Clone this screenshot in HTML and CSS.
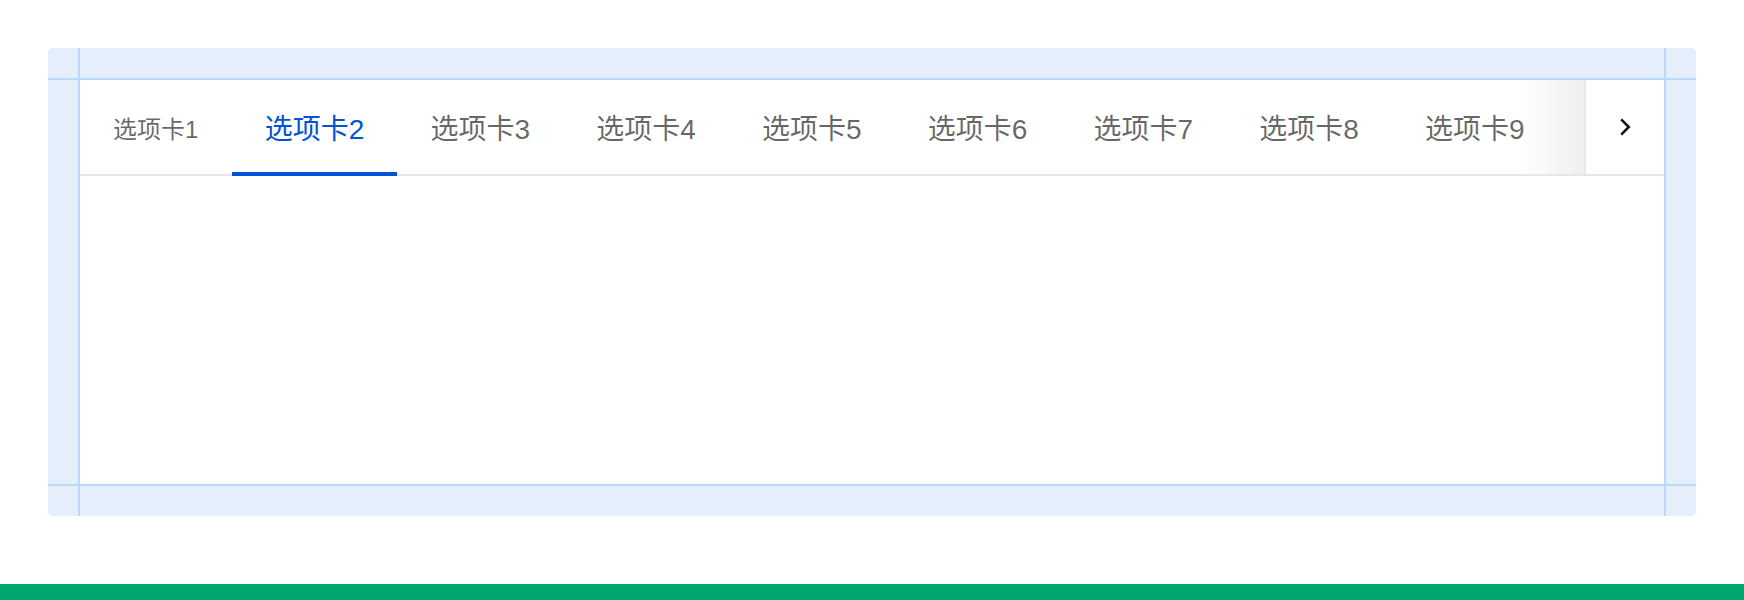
FILE: index.html
```html
<!DOCTYPE html>
<html lang="zh-CN">
<head>
<meta charset="utf-8">
<title>Tabs</title>
<link rel="stylesheet" href="styles.css">
</head>
<body>
<div class="page">
  <div class="frame">
    <div class="pad"></div><div class="pad"></div><div class="pad"></div>
    <div class="pad"></div>
    <div class="content">
      <div class="tabs-nav">
        <div class="tabs-scroll">
          <div class="tab tab-small">选项卡1</div>
          <div class="tab is-active">选项卡2</div>
          <div class="tab">选项卡3</div>
          <div class="tab">选项卡4</div>
          <div class="tab">选项卡5</div>
          <div class="tab">选项卡6</div>
          <div class="tab">选项卡7</div>
          <div class="tab">选项卡8</div>
          <div class="tab">选项卡9</div>
        </div>
        <div class="tabs-btn">
          <svg width="12" height="18" viewBox="0 0 12 18" aria-hidden="true"><polyline points="2.2,1.4 9.8,9 2.2,16.6" fill="none" stroke="#111" stroke-width="2.5" stroke-linecap="butt" stroke-linejoin="miter"/></svg>
        </div>
      </div>
    </div>
    <div class="pad"></div>
    <div class="pad"></div><div class="pad"></div><div class="pad"></div>
  </div>
</div>
<div class="green-bar"></div>
</body>
</html>
```
FILE: styles.css
```css
html, body {
  background: #ffffff;
}
body {
  margin: 0;
  font-family: "Liberation Sans", "Noto Sans CJK SC", sans-serif;
}
.page {
  padding: 48px 48px 0;
  height: 584px;
  box-sizing: border-box;
}
.frame {
  display: grid;
  grid-template-columns: 30px minmax(0, 1fr) 30px;
  grid-template-rows: 30px 404px 30px;
  gap: 2px;
  background: #bcd8fd;
  border-radius: 6px;
  overflow: hidden;
}
.pad {
  background: #e5effc;
}
.content {
  background: #ffffff;
  min-width: 0;
}
.tabs-nav {
  display: flex;
  align-items: flex-start;
  height: 96px;
  box-shadow: inset 0 -2px 0 #e7e7e7;
}
.tabs-scroll {
  flex: 1;
  min-width: 0;
  display: flex;
  overflow: hidden;
  height: 96px;
}
.tab {
  flex: none;
  position: relative;
  display: flex;
  align-items: center;
  height: 94px;
  padding: 0 33.1px;
  font-size: 28px;
  color: rgba(0, 0, 0, 0.6);
  white-space: nowrap;
}
.tab-small {
  font-size: 24px;
}
.tab.is-active {
  color: #0052d9;
}
.tab.is-active::after {
  content: "";
  position: absolute;
  left: 0;
  right: 0;
  bottom: -2px;
  height: 4px;
  background: #0052d9;
}
.tabs-btn {
  flex: none;
  position: relative;
  width: 78px;
  height: 94px;
  border-left: 2px solid #e7e7e7;
  display: flex;
  align-items: center;
  justify-content: center;
  background: #ffffff;
}
.tabs-btn::before {
  content: "";
  position: absolute;
  top: 0;
  bottom: 0;
  right: 100%;
  margin-right: 2px;
  width: 64px;
  background: linear-gradient(to right, rgba(255, 255, 255, 0), rgba(238, 238, 238, 0.95));
}
.green-bar {
  height: 16px;
  background: #00a870;
}
```
